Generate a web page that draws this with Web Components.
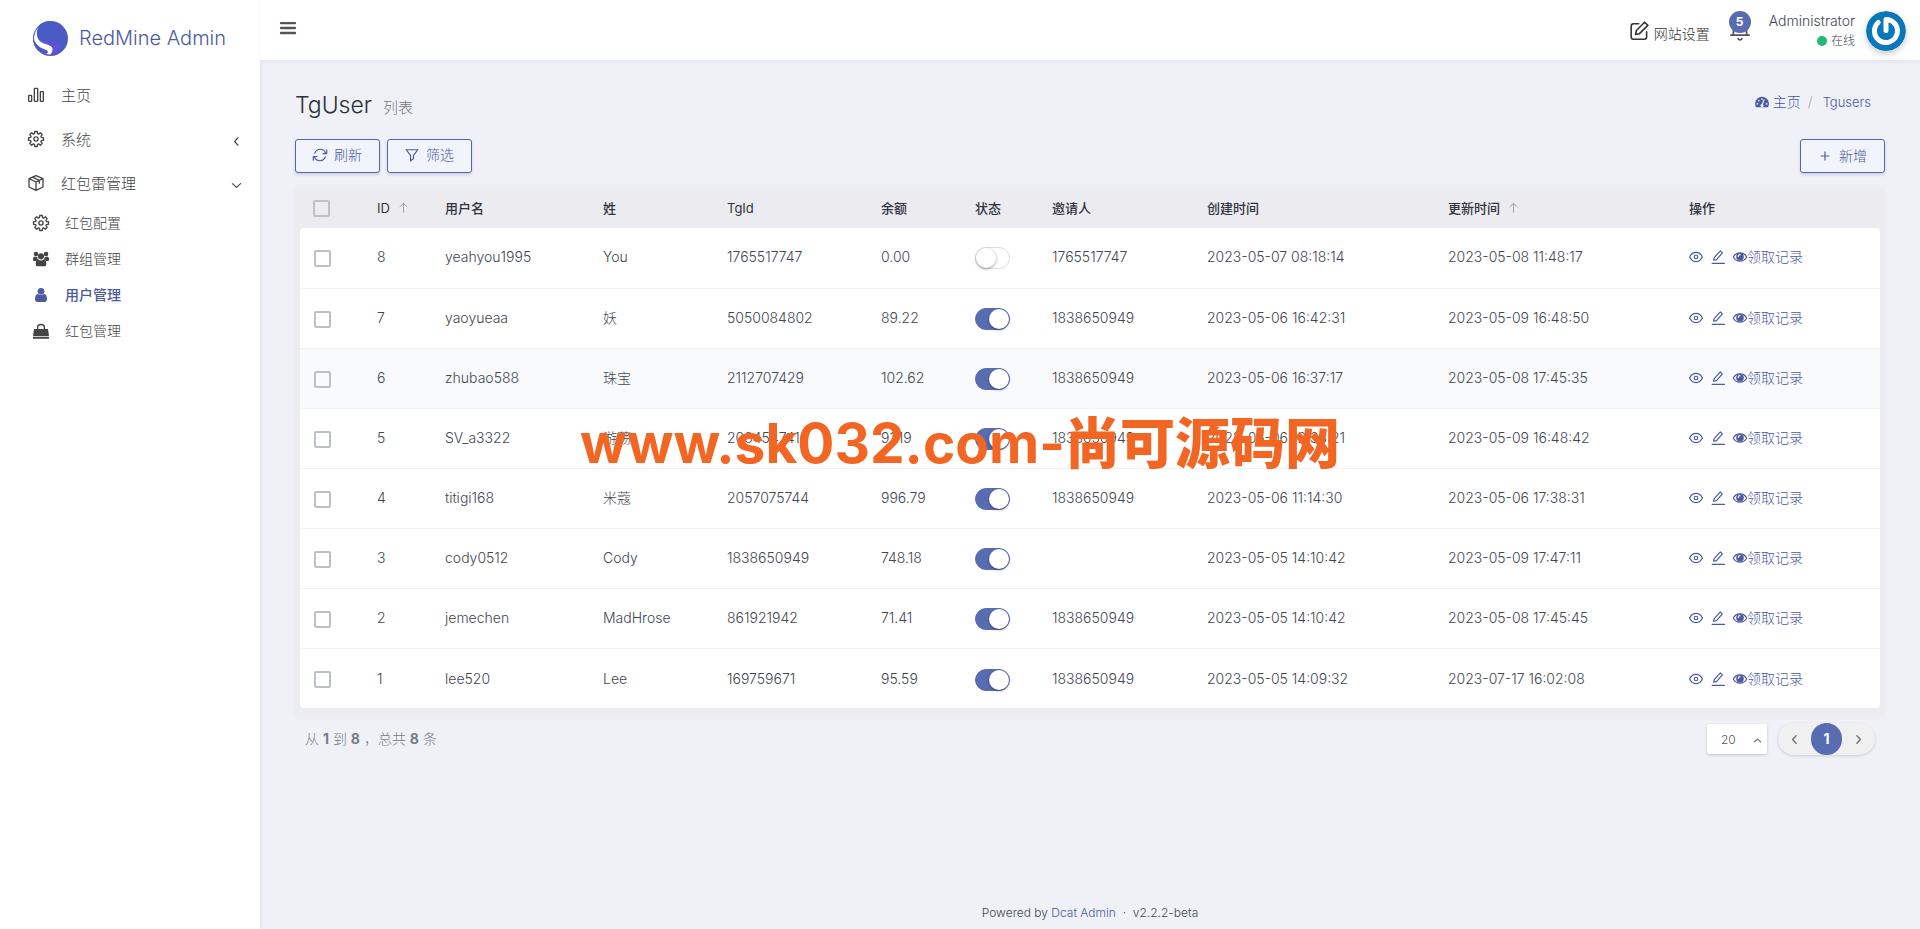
<!DOCTYPE html>
<html lang="zh-CN">
<head>
<meta charset="utf-8">
<title>TgUser - RedMine Admin</title>
<style>
  :root {
    --primary: #586cb1;
    --link: #4c5a9e;
    --text: #414750;
    --page: #eff1f7;
  }
  body {
    margin: 0;
    background: var(--page);
    color: var(--text);
    font: 300 14px/20px Inter, "Noto Sans CJK SC", sans-serif;
  }
</style>
</head>
<body>
<app-shell>
  <side-bar slot="side"></side-bar>
  <top-bar slot="top"></top-bar>
  <page-heading slot="main"></page-heading>
  <grid-toolbar slot="main"></grid-toolbar>
  <user-grid slot="main"></user-grid>
  <grid-pager slot="main"></grid-pager>
  <page-footer slot="foot"></page-footer>
</app-shell>
<water-mark>www.sk032.com-<b>尚可源码网</b></water-mark>

<script>
const define = (name, html, setup) => {
  const template = document.createElement('template');
  template.innerHTML = html;
  customElements.define(name, class extends HTMLElement {
    constructor() {
      super();
      this.attachShadow({ mode: 'open' }).append(template.content.cloneNode(true));
    }
    connectedCallback() { if (setup) setup(this, this.shadowRoot); }
  });
};

const gear = (() => {
  const pts = [];
  for (let i = 0; i < 8; i++) {
    const a = i * Math.PI / 4;
    for (const [d, r] of [[-.28, 8.4], [-.17, 11.4], [.17, 11.4], [.28, 8.4]])
      pts.push((12 + r * Math.sin(a + d)).toFixed(2) + ' ' + (12 - r * Math.cos(a + d)).toFixed(2));
  }
  return `<path d="M${pts.join('L')}Z"/><circle cx="12" cy="12" r="3.2"/>`;
})();

const icons = {
  bars: '<rect x="1" y="12.500" width="4.500" height="9" rx="1"/><rect x="9.500" y="2" width="5" height="19.500" rx="1"/><rect x="18.500" y="7" width="4.500" height="14.500" rx="1"/>',
  gear,
  box: '<path d="M12 .8 22.500 5.500v12.500L12 23.200 1.500 18V5.500ZM1.500 5.500 12 10.500l10.500-5M12 10.500v12.500M6.500 3.200l10.500 5v4"/>',
  group: '<g fill="currentColor" stroke="none"><circle cx="4.500" cy="4.500" r="3.400"/><circle cx="19.500" cy="4.500" r="3.400"/><circle cx="12" cy="8" r="4.600"/><path d="M0 13c0-3 1-4.700 3-4.700 1 .8 2.200 1 3.500.7 0 2 .6 3.300 1.600 4.400C6.500 13.400 5 14 4.300 15H2C.7 15 0 14.300 0 13ZM24 13c0-3-1-4.700-3-4.700-1 .8-2.200 1-3.500.7 0 2-.6 3.300-1.600 4.400 1.600 0 3.100.6 3.800 1.600H22c1.300 0 2-.7 2-2ZM4 19.500c0-4 1.300-6.600 4-6.600 2.400 1.800 5.600 1.800 8 0 2.700 0 4 2.600 4 6.600 0 2.300-1.200 3.500-3.300 3.500H7.300C5.200 23 4 21.800 4 19.500Z"/></g>',
  user: '<g fill="currentColor" stroke="none"><circle cx="12" cy="6.500" r="5"/><path d="M3 18.500c0-5 1.700-8 4.800-8 2.500 2 5.900 2 8.400 0 3.100 0 4.800 3 4.800 8 0 2.500-1.500 4-3.500 4h-11c-2 0-3.500-1.500-3.500-4Z"/></g>',
  bag: '<path d="M1.500 9h21l1.500 11H0ZM0 21h24v2.500H0Z" fill="currentColor" stroke="none"/><path d="M7 12V6c0-5 10-5 10 0v6"/>',
  left: '<path d="m16 2-9 10 9 10"/>',
  right: '<path d="m8 2 9 10-9 10"/>',
  down: '<path d="m1 7 11 10L23 7"/>',
  upward: '<path d="m1 17 11-10 11 10"/>',
  menu: '<path d="M0 3.500h24M0 12h24M0 20.500h24"/>',
  edit: '<path d="M11 3.500H4.500a3 3 0 0 0-3 3V20a3 3 0 0 0 3 3H18a3 3 0 0 0 3-3v-6.500M18.500 1.500l4 4L12 16l-5 1 1-5Z"/>',
  bell: '<path d="M2 17.500h20M4.500 17.500C5 15.500 5 13 5 9a7 7 0 0 1 14 0c0 4 0 6.500.5 8.500M10 21.500c.7 1.800 3.300 1.800 4 0"/>',
  gauge: '<path d="M12 3A12 12 0 0 0 1.500 20.500c.3.500.7.500 1 .500h19c.3 0 .7 0 1-.500A12 12 0 0 0 12 3Z" fill="currentColor" stroke="none"/><g fill="#eff1f7" stroke="none"><circle cx="4" cy="15" r="1.500"/><circle cx="6.500" cy="9.500" r="1.500"/><circle cx="12" cy="7" r="1.500"/><circle cx="20" cy="15" r="1.500"/><circle cx="12" cy="18" r="2.600"/></g><path d="m12 17 3.500-8.500" stroke="#eff1f7"/>',
  refresh: '<path d="M3 9A9.800 9.800 0 0 1 21.500 8.500M23.500 3v6.500H17M21 15A9.800 9.800 0 0 1 2.500 15.500M.5 21v-6.500H7"/>',
  filter: '<path d="M2 3h20l-7.500 9.500v6L9.500 22v-9.500Z"/>',
  plus: '<path d="M12 5v14M5 12h14"/>',
  arrow: '<path d="M12 22V3M4.500 10 12 3l7.500 7"/>',
  eye: '<path d="M1 12c5-10.500 17-10.500 22 0-5 10.500-17 10.500-22 0Z"/><circle cx="12" cy="12" r="3"/>',
  pen: '<path d="M2 23h21M4.500 17.500l1-4.500L16 1.500l3.500 3.500L9.500 16.500Z"/>',
  eyefill: '<path d="M.5 12c5-9.500 18-9.500 23 0-5 9.500-18 9.500-23 0Z"/><circle cx="12" cy="11.500" r="6.500" fill="currentColor" stroke="none"/><path d="M9 11a3 3 0 0 1 3-3" stroke="#fff"/>'
};

define('ui-icon', `
<style>
  :host { display: inline-flex; flex: none; width: 14px; height: 14px; }
  svg { width: 100%; height: 100%; fill: none; stroke: currentColor; stroke-width: var(--stroke, 2);
        stroke-linecap: round; stroke-linejoin: round; overflow: visible; }
</style>
<svg viewBox="0 0 24 24" aria-hidden="true"></svg>`,
(el, root) => { root.querySelector('svg').innerHTML = icons[el.getAttribute('name')] || ''; });

define('app-shell', `
<style>
  :host { display: grid; grid-template-columns: 260px minmax(0, 1fr); min-height: 100vh; }
  aside { background: #fff; box-shadow: 0 0 4px rgba(40, 50, 90, .08); }
  .page { display: flex; flex-direction: column; }
  main { flex: 1; padding: 30px 35px 0; }
</style>
<aside><slot name="side"></slot></aside>
<div class="page">
  <slot name="top"></slot>
  <main><slot name="main"></slot></main>
  <slot name="foot"></slot>
</div>`);

define('side-bar', `
<style>
  :host { display: block; }
  .brand { display: flex; align-items: center; gap: 11px; height: 73px; padding: 3px 0 0 33px; box-sizing: border-box;
           color: var(--link); font-size: 20px; text-decoration: none; }
  .brand svg { width: 35px; height: 35px; }
  nav { display: flex; flex-direction: column; }
</style>
<a class="brand" href="#">
  <svg viewBox="0 0 35 35" aria-hidden="true">
    <circle cx="17.500" cy="17.500" r="17.500" fill="#4a5bc4"/>
    <path d="M8 18c3 5 17 0 19 7 1 3-3 6-7 9-1-6-10-9-12-16Z" fill="#6350d8"/>
    <path d="M5.500 5C2.500 12 3.500 18.500 9 21.500c5 2.700 11 2.500 10.500 7.500-.3 2.500-1.500 4-2.500 4.500-1.500 0-2.500-.2-4-.5 3-1.500 2.500-3.500-1-4.500C5.500 26.500 1 21 .5 17 .3 12 2 8 5.500 5Z" fill="#fff"/>
    <path d="M17.500 .5a17 17 0 0 0-12 29" fill="none" stroke="#4a5bc4"/>
  </svg>
  RedMine Admin
</a>
<nav>
  <nav-item icon="bars">主页</nav-item>
  <nav-item icon="gear" arrow="left">系统</nav-item>
  <nav-item icon="box" arrow="down">红包雷管理</nav-item>
  <nav-item sub icon="gear">红包配置</nav-item>
  <nav-item sub icon="group">群组管理</nav-item>
  <nav-item sub active icon="user">用户管理</nav-item>
  <nav-item sub icon="bag">红包管理</nav-item>
</nav>`);

define('nav-item', `
<style>
  :host { display: block; }
  a { display: flex; align-items: center; height: 44px; padding: 0 19px 0 28px; color: #444; font-size: 15px; text-decoration: none; }
  .icon { width: 16px; height: 16px; margin-right: 17px; }
  .label { padding-top: 2px; }
  .arrow { width: 9px; height: 9px; margin: 4px 0 0 auto; --stroke: 3; }
  :host([sub]) a { height: 36px; padding-left: 33px; font-size: 14px; }
  :host([sub]) .icon { margin-right: 16px; }
  :host([sub]) .label { padding-top: 0; }
  :host([active]) a { color: var(--link); font-weight: 500; }
</style>
<a href="#"><ui-icon class="icon"></ui-icon><span class="label"><slot></slot></span></a>`,
(el, root) => {
  const draw = (icon, name) => { icon.shadowRoot.querySelector('svg').innerHTML = icons[name]; };
  draw(root.querySelector('.icon'), el.getAttribute('icon'));
  if (el.hasAttribute('arrow')) {
    const arrow = document.createElement('ui-icon');
    arrow.className = 'arrow';
    root.querySelector('a').append(arrow);
    draw(arrow, el.getAttribute('arrow'));
  }
});

define('top-bar', `
<style>
  :host { display: flex; align-items: center; height: 60px; box-sizing: border-box; padding: 0 14px 0 21px;
          background: #fff; box-shadow: 0 2px 4px rgba(40, 50, 90, .06); }
  button { display: flex; padding: 0; border: 0; background: none; color: #555; }
  .menu { margin-bottom: 4px; --stroke: 4; }
  .settings { display: flex; align-items: center; gap: 5px; margin-left: auto; color: #333; text-decoration: none; }
  .settings span { padding-top: 8px; }
  .settings ui-icon { width: 19px; height: 19px; padding-bottom: 0; }
  .bell { position: relative; margin: 0 18px 0 19px; }
  .bell ui-icon { width: 22px; height: 22px; }
  .badge { position: absolute; left: 0; bottom: 8px; width: 22px; height: 22px; border-radius: 50%;
           background: var(--primary); color: #fff; font: 700 12px/22px Inter, sans-serif; text-align: center; }
  .who { padding-top: 2px; text-align: right; }
  .who small { display: flex; align-items: center; justify-content: flex-end; gap: 4px; font-size: 12px; }
  .who i { width: 10px; height: 10px; border-radius: 50%; background: #21b978; }
  .avatar { width: 40px; height: 40px; margin: 2px 0 0 11px; border-radius: 50%; box-shadow: 0 3px 6px rgba(0, 0, 0, .2); }
</style>
<button class="menu" aria-label="菜单"><ui-icon name="menu"></ui-icon></button>
<a class="settings" href="#"><ui-icon name="edit"></ui-icon><span>网站设置</span></a>
<button class="bell" aria-label="通知"><ui-icon name="bell"></ui-icon><span class="badge">5</span></button>
<div class="who">Administrator<small><i></i>在线</small></div>
<svg class="avatar" viewBox="0 0 40 40" aria-hidden="true">
  <circle cx="20" cy="20" r="20" fill="#0a77ba"/>
  <path d="M20 19.500V8.500A11.500 11.500 0 1 1 12.200 11.500" fill="none" stroke="#fff" stroke-width="5" stroke-linecap="round" stroke-linejoin="round"/>
</svg>`);

define('page-heading', `
<style>
  :host { display: flex; justify-content: space-between; height: 49px; }
  h1 { margin: 0; color: #2c3038; font: inherit; font-size: 23px; line-height: 30px; }
  small { margin-left: 11px; color: #777; font-size: 15px; }
  nav { display: flex; height: 24px; align-items: center; padding-right: 14px; }
  a { display: flex; align-items: center; gap: 4px; color: var(--link); text-decoration: none; }
  i { margin: 0 10px 0 7px; color: #aab; font-style: normal; }
  nav .here { font-size: 13px; }
</style>
<h1>TgUser<small>列表</small></h1>
<nav><a href="#"><ui-icon name="gauge"></ui-icon>主页</a><i>/</i><a class="here" href="#">Tgusers</a></nav>`);

define('grid-toolbar', `
<style>
  :host { display: flex; gap: 7px; margin-bottom: 15px; }
  button { display: flex; align-items: center; gap: 7px; height: 34px; padding: 0 17px 2px; border: 1px solid #5765a8;
           border-radius: 3px; background: #f1f4fa; color: var(--link); font: inherit;
           box-shadow: 0 2px 3px rgba(80, 90, 140, .2); }
  .add { margin-left: auto; padding-bottom: 0; }
</style>
<button><ui-icon name="refresh"></ui-icon>刷新</button>
<button><ui-icon name="filter"></ui-icon>筛选</button>
<button class="add"><ui-icon name="plus"></ui-icon>新增</button>`);

const users = [
  ['8', 'yeahyou1995', 'You', '1765517747', '0.00', false, '1765517747', '2023-05-07 08:18:14', '2023-05-08 11:48:17'],
  ['7', 'yaoyueaa', '妖', '5050084802', '89.22', true, '1838650949', '2023-05-06 16:42:31', '2023-05-09 16:48:50'],
  ['6', 'zhubao588', '珠宝', '2112707429', '102.62', true, '1838650949', '2023-05-06 16:37:17', '2023-05-08 17:45:35'],
  ['5', 'SV_a3322', '游荡', '2084547410', '91.19', true, '1838650949', '2023-05-06 12:38:21', '2023-05-09 16:48:42'],
  ['4', 'titigi168', '米蔻', '2057075744', '996.79', true, '1838650949', '2023-05-06 11:14:30', '2023-05-06 17:38:31'],
  ['3', 'cody0512', 'Cody', '1838650949', '748.18', true, '', '2023-05-05 14:10:42', '2023-05-09 17:47:11'],
  ['2', 'jemechen', 'MadHrose', '861921942', '71.41', true, '1838650949', '2023-05-05 14:10:42', '2023-05-08 17:45:45'],
  ['1', 'lee520', 'Lee', '169759671', '95.59', true, '1838650949', '2023-05-05 14:09:32', '2023-07-17 16:02:08']
];

define('user-grid', `
<style>
  :host { display: block; padding: 0 5px 8px; background: #ebebf0; box-shadow: 0 0 4px #ebebf0; border-radius: 3px; }
  table { width: 100%; table-layout: fixed; border-collapse: separate; border-spacing: 0; }
  th, td { box-sizing: border-box; padding: 0 0 0 13px; text-align: left; white-space: nowrap; vertical-align: middle; }
  th { height: 40px; color: #30353d; font-size: 13px; font-weight: 400; line-height: 18px; }
  th:not(.latin) { font-weight: 500; }
  th ui-icon { width: 11px; height: 11px; margin-left: 8px; color: #999; }
  td { height: 60px; padding-bottom: 1px; background: #fff; border-bottom: 1px solid #f1f2f6; }
  td:first-child { padding-left: 14px; }
  tbody tr:first-child td { height: 61px; padding-bottom: 2px; }
  tbody tr:last-child td { height: 59px; padding-bottom: 0; border-bottom: 0; }
  tbody tr:hover td, tr.hover td { background: #f8fafc; }
  tbody tr:first-child td:first-child { border-top-left-radius: 4px; }
  tbody tr:first-child td:last-child { border-top-right-radius: 4px; }
  tbody tr:last-child td:first-child { border-bottom-left-radius: 4px; }
  tbody tr:last-child td:last-child { border-bottom-right-radius: 4px; }
  .pick { display: block; box-sizing: border-box; appearance: none; width: 17px; height: 17px; margin: 0; border: 2px solid #bcc1c8; border-radius: 2px; }
  .toggle { display: block; appearance: none; box-sizing: border-box; width: 35px; height: 22px; margin: 0;
            border: 1px solid #dfdfdf; border-radius: 11px; background: #fff; }
  td .pick, td .toggle { margin-top: 2px; }
  .toggle::before { content: ""; display: block; width: 20px; height: 20px; border-radius: 50%; background: #fff;
                    box-shadow: 0 1px 3px rgba(0, 0, 0, .4); }
  .toggle:checked { border-color: var(--primary); background: var(--primary); }
  .toggle:checked::before { margin-left: auto; }
  .actions { display: flex; align-items: center; }
  .actions a { display: flex; align-items: center; margin-right: 8px; color: var(--link); text-decoration: none; }
</style>
<table>
  <colgroup></colgroup>
  <thead><tr>
    <th><input type="checkbox" class="pick" aria-label="全选"></th>
    <th class="latin">ID<ui-icon name="arrow"></ui-icon></th><th>用户名</th><th>姓</th><th class="latin">TgId</th><th>余额</th>
    <th>状态</th><th>邀请人</th><th>创建时间</th><th>更新时间<ui-icon name="arrow"></ui-icon></th><th>操作</th>
  </tr></thead>
  <tbody></tbody>
</table>`,
(el, root) => {
  root.querySelector('colgroup').innerHTML = [64, 68, 158, 124, 154, 94, 77, 155, 241, 241, 204]
    .map(w => `<col style="width:${w}px">`).join('');
  root.querySelector('tbody').innerHTML = users.map((u, row) => `<tr${row === 2 ? ' class="hover"' : ''}>
    <td><input type="checkbox" class="pick" aria-label="选择 ${u[0]}"></td>
    ${u.map((v, i) => i === 5
      ? `<td><input type="checkbox" class="toggle" aria-label="状态" ${v ? 'checked' : ''}></td>`
      : `<td>${v}</td>`).join('')}
    <td><div class="actions"><a href="#" aria-label="查看"><ui-icon name="eye"></ui-icon></a><a href="#" aria-label="编辑"><ui-icon name="pen"></ui-icon></a><a href="#"><ui-icon name="eyefill"></ui-icon>领取记录</a></div></td>
  </tr>`).join('');
});

define('grid-pager', `
<style>
  :host { display: flex; align-items: center; margin-top: 6px; height: 34px; padding: 0 10px; color: #777c84; }
  b { font-weight: 700; }
  .size { position: relative; display: flex; margin-left: auto; }
  select { appearance: none; width: 60px; height: 30px; padding: 2px 0 0 14px; border: 0; border-radius: 2px; background: #fff;
           color: #555; font: inherit; font-size: 12px; box-shadow: 0 1px 3px rgba(0, 0, 0, .2); }
  .size ui-icon { position: absolute; right: 6px; top: 13px; width: 7px; height: 7px; --stroke: 4; pointer-events: none; }
  nav { display: flex; align-items: center; height: 32px; margin-left: 11px; border-radius: 16px; background: #f0f0f0;
        box-shadow: 0 1px 3px rgba(0, 0, 0, .15); }
  a { display: flex; justify-content: center; align-items: center; width: 33px; height: 32px; color: #777; text-decoration: none; }
  a ui-icon { width: 9px; height: 9px; --stroke: 4; }
  .on { width: 31px; border-radius: 16px; background: var(--primary); color: #fff; font-weight: 700; }
</style>
<span>从 <b>1</b> 到 <b>8</b> ，总共 <b>8</b> 条</span>
<label class="size"><select aria-label="每页条数"><option>20</option><option>50</option></select><ui-icon name="upward"></ui-icon></label>
<nav><a href="#" aria-label="上一页"><ui-icon name="left"></ui-icon></a><a class="on" href="#">1</a><a href="#" aria-label="下一页"><ui-icon name="right"></ui-icon></a></nav>`);

define('page-footer', `
<style>
  :host { display: block; padding: 7px 0 6px; text-align: center; font-size: 12px; }
  a { color: var(--link); text-decoration: none; }
</style>
Powered by <a href="#">Dcat Admin</a> &nbsp;·&nbsp; v2.2.2-beta`);

define('water-mark', `
<style>
  :host { position: fixed; inset: calc(50% - 56px) 0 auto; display: block; text-align: center; pointer-events: none;
          color: #f26522; font-size: 55px; font-weight: 700; line-height: 68px; white-space: nowrap; }
  ::slotted(b) { font-weight: 900; }
</style>
<slot></slot>`);
</script>
</body>
</html>
